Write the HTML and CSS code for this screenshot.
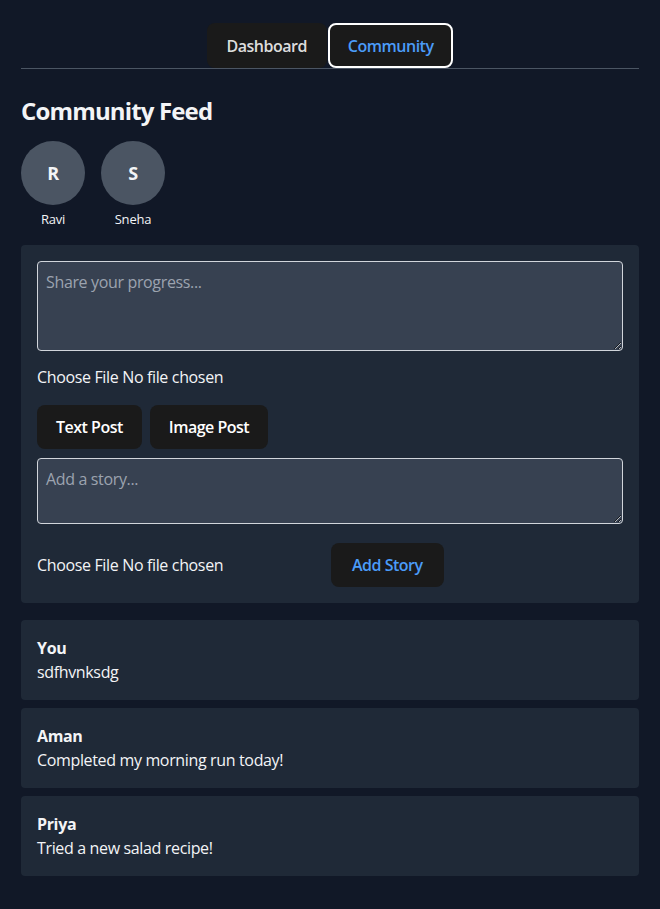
FILE: index.html
```html
<!DOCTYPE html>
<html lang="en">
<head>
<meta charset="utf-8">
<title>Community Feed</title>
<link rel="stylesheet" href="styles.css">
</head>
<body>
<div class="app">
  <nav class="tabs">
    <button class="tab">Dashboard</button>
    <button class="tab tab-active">Community</button>
  </nav>

  <h1 class="title">Community Feed</h1>

  <div class="stories">
    <div class="story">
      <div class="avatar">R</div>
      <span class="story-name">Ravi</span>
    </div>
    <div class="story">
      <div class="avatar">S</div>
      <span class="story-name">Sneha</span>
    </div>
  </div>

  <section class="composer">
    <textarea class="input input-post" placeholder="Share your progress..."></textarea>
    <div class="file-row">
      <span class="file-input">Choose File No file chosen</span>
    </div>
    <div class="btn-row">
      <button class="btn">Text Post</button>
      <button class="btn">Image Post</button>
    </div>
    <textarea class="input input-story" placeholder="Add a story..."></textarea>
    <div class="story-row">
      <span class="file-input">Choose File No file chosen</span>
      <button class="btn btn-blue">Add Story</button>
    </div>
  </section>

  <div class="posts">
    <article class="post">
      <div class="post-author">You</div>
      <div class="post-text">sdfhvnksdg</div>
    </article>
    <article class="post">
      <div class="post-author">Aman</div>
      <div class="post-text">Completed my morning run today!</div>
    </article>
    <article class="post">
      <div class="post-author">Priya</div>
      <div class="post-text">Tried a new salad recipe!</div>
    </article>
  </div>
</div>
</body>
</html>
```

FILE: styles.css
```css
* { box-sizing: border-box; }

html, body {
  margin: 0;
  padding: 0;
  background: #111827;
}

body {
  font-family: "Open Sans", "Noto Sans", sans-serif;
  font-size: 16px;
  line-height: 24px;
  letter-spacing: -0.35px;
  color: rgba(255, 255, 255, 0.87);
}

.app {
  padding: 23px 21px 34px;
}

.tabs {
  display: flex;
  justify-content: center;
  gap: 1px;
  border-bottom: 1px solid #4b5563;
}

.tab {
  font-family: inherit;
  font-size: 16px;
  font-weight: 600;
  line-height: 24px;
  letter-spacing: -0.5px;
  padding: 10px 19px;
  height: 45px;
  border: 1px solid transparent;
  border-radius: 8px;
  background: #1a1a1a;
  color: rgba(255, 255, 255, 0.87);
}

.tab-active {
  border: 2px solid #ffffff;
  color: #4b9cf8;
  padding: 9px 18px;
}

.title {
  margin: 26px 0 14px;
  font-size: 24px;
  line-height: 32px;
  font-weight: 700;
  letter-spacing: -0.85px;
  color: #f3f4f6;
}

.stories {
  display: flex;
  gap: 16px;
  margin-bottom: 16px;
}

.story {
  display: flex;
  flex-direction: column;
  align-items: center;
  width: 64px;
}

.avatar {
  width: 64px;
  height: 64px;
  border-radius: 50%;
  background: #4b5563;
  display: flex;
  align-items: center;
  justify-content: center;
  font-size: 18px;
  font-weight: 700;
  color: #f3f4f6;
}

.story-name {
  margin-top: 4px;
  font-size: 13px;
  line-height: 20px;
  letter-spacing: -0.2px;
  color: #f3f4f6;
}

.composer {
  background: #1f2937;
  border-radius: 4px;
  padding: 16px;
  display: flex;
  flex-direction: column;
}

.input {
  display: block;
  width: 100%;
  font-family: inherit;
  font-size: 16px;
  line-height: 24px;
  letter-spacing: -0.35px;
  padding: 8px;
  background: #374151;
  border: 1px solid #d1d5db;
  border-radius: 4px;
  color: #f3f4f6;
  resize: vertical;
}

.input::placeholder {
  color: #9ca3af;
}

.input-post { height: 90px; }
.input-story { height: 66px; margin-top: 9px; }

.file-row {
  margin: 14px 0 16px;
  height: 24px;
}

.file-input {
  display: inline-block;
  font-size: 16px;
  line-height: 24px;
  color: #f3f4f6;
}

.btn-row {
  display: flex;
  gap: 8px;
}

.btn {
  font-family: inherit;
  font-size: 16px;
  font-weight: 600;
  line-height: 24px;
  letter-spacing: -0.5px;
  height: 44px;
  padding: 9px 18px;
  border: 1px solid transparent;
  border-radius: 8px;
  background: #1a1a1a;
  color: #ffffff;
}

.btn-blue {
  color: #4b9cf8;
  padding: 9px 20px;
}

.story-row {
  display: flex;
  align-items: center;
  margin-top: 19px;
}

.story-row .file-input {
  width: 294px;
}

.posts {
  margin-top: 17px;
  display: flex;
  flex-direction: column;
  gap: 8px;
}

.post {
  background: #1f2937;
  border-radius: 4px;
  padding: 16px;
  height: 80px;
}

.post-author {
  font-weight: 700;
  color: #f3f4f6;
}

.post-text {
  color: #f3f4f6;
}
```
